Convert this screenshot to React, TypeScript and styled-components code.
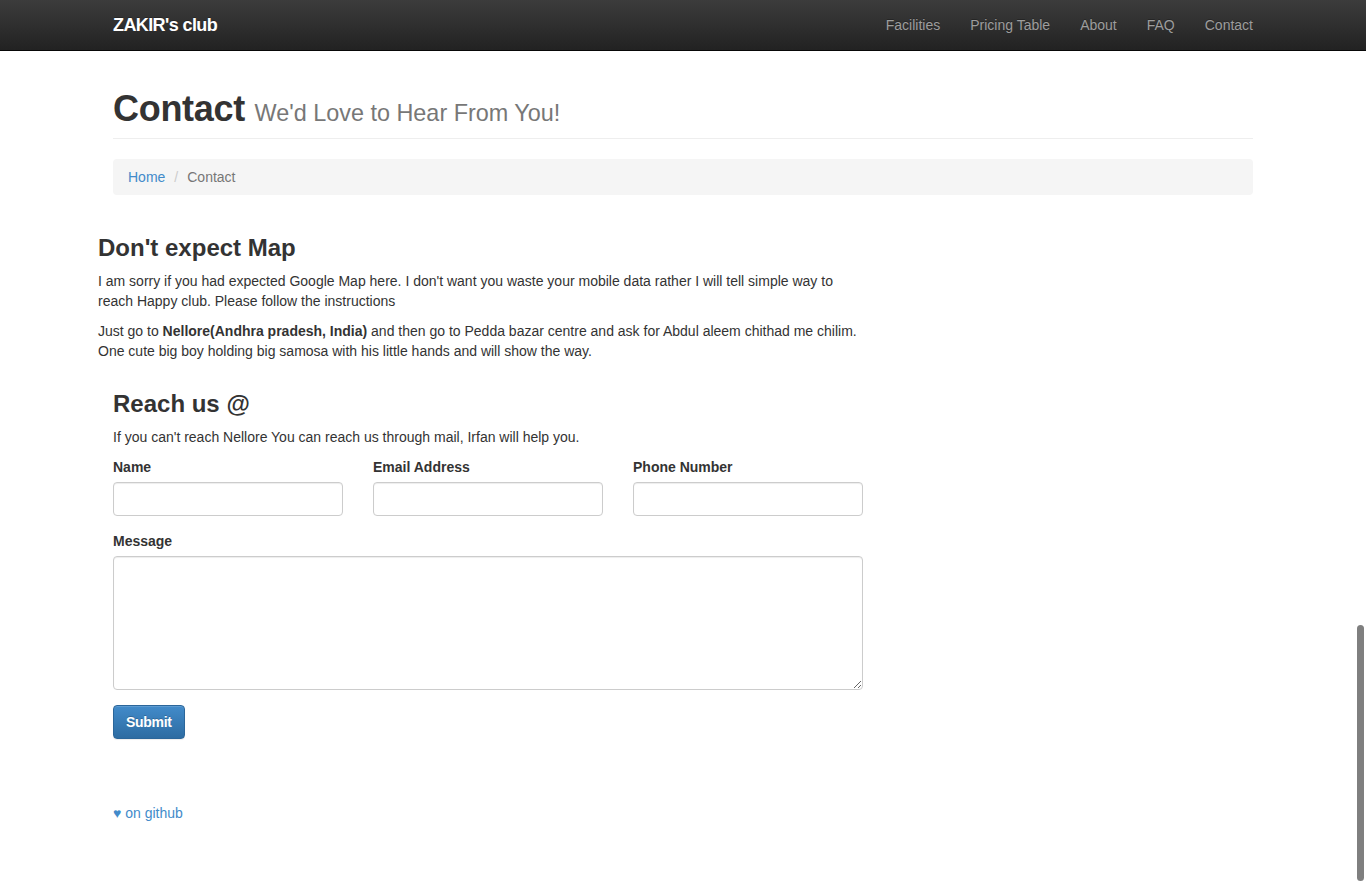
import React from 'react'
import styled, { createGlobalStyle } from 'styled-components'

const GlobalStyle = createGlobalStyle`
  html, body {
    margin: 0;
    padding: 0;
    background: #fff;
  }
  body {
    font-family: 'Liberation Sans', Arial, Helvetica, sans-serif;
    font-size: 14px;
    line-height: 1.428571429;
    color: #333;
  }
  * {
    box-sizing: border-box;
  }
`

const Navbar = styled.header`
  height: 51px;
  background-image: linear-gradient(to bottom, #3c3c3c 0%, #222 100%);
  border-bottom: 1px solid #080808;
`

const Container = styled.div`
  width: 1170px;
  margin: 0 auto;
  padding: 0 15px;
`

const NavInner = styled(Container)`
  display: flex;
  align-items: center;
  justify-content: space-between;
  height: 50px;
`

const Brand = styled.a`
  color: #fff;
  font-size: 18px;
  font-weight: bold;
  letter-spacing: -0.6px;
  line-height: 20px;
  text-decoration: none;
  text-shadow: 0 -1px 0 rgba(0, 0, 0, 0.25);
`

const NavList = styled.ul`
  display: flex;
  list-style: none;
  margin: 0 -15px 0 0;
  padding: 0;
`

const NavLink = styled.a`
  display: block;
  padding: 15px;
  line-height: 20px;
  color: #9d9d9d;
  text-decoration: none;
  text-shadow: 0 -1px 0 rgba(0, 0, 0, 0.25);
`

const Main = styled(Container)`
  display: flex;
  flex-direction: column;
`

const PageHeader = styled.div`
  margin-top: 38px;
  padding-bottom: 9px;
  border-bottom: 1px solid #eee;
`

const Title = styled.h1`
  margin: 0;
  font-size: 36px;
  font-weight: bold;
  letter-spacing: -0.3px;
  line-height: 1.1;
`

const Subtitle = styled.small`
  font-size: 65%;
  font-weight: normal;
  letter-spacing: 0;
  line-height: 1;
  color: #777;
`

const Breadcrumb = styled.ol`
  display: flex;
  list-style: none;
  margin: 20px 0 0;
  padding: 8px 15px;
  background-color: #f5f5f5;
  border-radius: 4px;
`

const Crumb = styled.li<{ $active?: boolean }>`
  color: ${({ $active }) => ($active ? '#777' : '#428bca')};
`

const CrumbDivider = styled.li`
  padding: 0 9px;
  color: #ccc;
`

const CrumbLink = styled.a`
  color: #428bca;
  text-decoration: none;
`

const MapSection = styled.section`
  width: 765px;
  margin: 40px -15px 0;
  display: flex;
  flex-direction: column;
`

const SectionTitle = styled.h3`
  margin: 0 0 10px;
  font-size: 24px;
  font-weight: bold;
  line-height: 1.1;
`

const Text = styled.p<{ $gap?: number }>`
  margin: 0 0 ${({ $gap }) => $gap ?? 10}px;
`

const FormSection = styled.section`
  width: 750px;
  margin-top: 30px;
  display: flex;
  flex-direction: column;
`

const FieldRow = styled.div`
  display: grid;
  grid-template-columns: repeat(3, 1fr);
  column-gap: 30px;
  margin-bottom: 15px;
`

const Field = styled.div`
  display: flex;
  flex-direction: column;
`

const Label = styled.label`
  display: block;
  margin-bottom: 5px;
  font-weight: bold;
  line-height: 20px;
`

const Input = styled.input`
  display: block;
  width: 100%;
  height: 34px;
  padding: 6px 12px;
  font: inherit;
  color: #555;
  background: #fff;
  border: 1px solid #ccc;
  border-radius: 4px;
  box-shadow: inset 0 1px 1px rgba(0, 0, 0, 0.075);
  outline: none;
`

const TextArea = styled.textarea`
  display: block;
  width: 100%;
  height: 134px;
  padding: 6px 12px;
  font: inherit;
  color: #555;
  background: #fff;
  border: 1px solid #ccc;
  border-radius: 4px;
  box-shadow: inset 0 1px 1px rgba(0, 0, 0, 0.075);
  outline: none;
`

const MessageGroup = styled.div`
  margin-bottom: 15px;
`

const SubmitButton = styled.button`
  align-self: flex-start;
  height: 34px;
  padding: 6px 12px;
  font: inherit;
  font-weight: bold;
  letter-spacing: -0.3px;
  line-height: 20px;
  color: #fff;
  background-image: linear-gradient(to bottom, #428bca 0%, #2d6ca2 100%);
  border: 1px solid #2b669a;
  border-radius: 4px;
  text-shadow: 0 -1px 0 rgba(0, 0, 0, 0.2);
  box-shadow: inset 0 1px 0 rgba(255, 255, 255, 0.15), 0 1px 1px rgba(0, 0, 0, 0.075);
  cursor: pointer;
`

const Footer = styled.footer`
  margin-top: 64px;
`

const FooterLink = styled.a`
  color: #428bca;
  text-decoration: none;
`

const ScrollThumb = styled.div`
  position: fixed;
  top: 625px;
  right: 2px;
  width: 7px;
  height: 256px;
  border-radius: 4px;
  background: #7f7f7f;
`

const NAV_ITEMS = ['Facilities', 'Pricing Table', 'About', 'FAQ', 'Contact']

export default function App() {
  return (
    <>
      <GlobalStyle />
      <Navbar>
        <NavInner>
          <Brand href="#">ZAKIR's club</Brand>
          <NavList>
            {NAV_ITEMS.map(item => (
              <li key={item}>
                <NavLink href="#">{item}</NavLink>
              </li>
            ))}
          </NavList>
        </NavInner>
      </Navbar>
      <Main>
        <PageHeader>
          <Title>
            Contact <Subtitle>We'd Love to Hear From You!</Subtitle>
          </Title>
        </PageHeader>
        <Breadcrumb>
          <Crumb>
            <CrumbLink href="#">Home</CrumbLink>
          </Crumb>
          <CrumbDivider aria-hidden>/</CrumbDivider>
          <Crumb $active>Contact</Crumb>
        </Breadcrumb>

        <MapSection>
          <SectionTitle>Don't expect Map</SectionTitle>
          <Text>
            I am sorry if you had expected Google Map here. I don't want you waste your mobile data rather I will
            tell simple way to reach Happy club. Please follow the instructions
          </Text>
          <Text $gap={0}>
            Just go to <b>Nellore(Andhra pradesh, India)</b> and then go to Pedda bazar centre and ask for Abdul
            aleem chithad me chilim. One cute big boy holding big samosa with his little hands and will show the way.
          </Text>
        </MapSection>

        <FormSection>
          <SectionTitle>Reach us @</SectionTitle>
          <Text>If you can't reach Nellore You can reach us through mail, Irfan will help you.</Text>
          <FieldRow>
            <Field>
              <Label>Name</Label>
              <Input type="text" />
            </Field>
            <Field>
              <Label>Email Address</Label>
              <Input type="email" />
            </Field>
            <Field>
              <Label>Phone Number</Label>
              <Input type="tel" />
            </Field>
          </FieldRow>
          <MessageGroup>
            <Label>Message</Label>
            <TextArea />
          </MessageGroup>
          <SubmitButton type="button">Submit</SubmitButton>
        </FormSection>

        <Footer>
          <FooterLink href="#">♥ on github</FooterLink>
        </Footer>
      </Main>
      <ScrollThumb />
    </>
  )
}
